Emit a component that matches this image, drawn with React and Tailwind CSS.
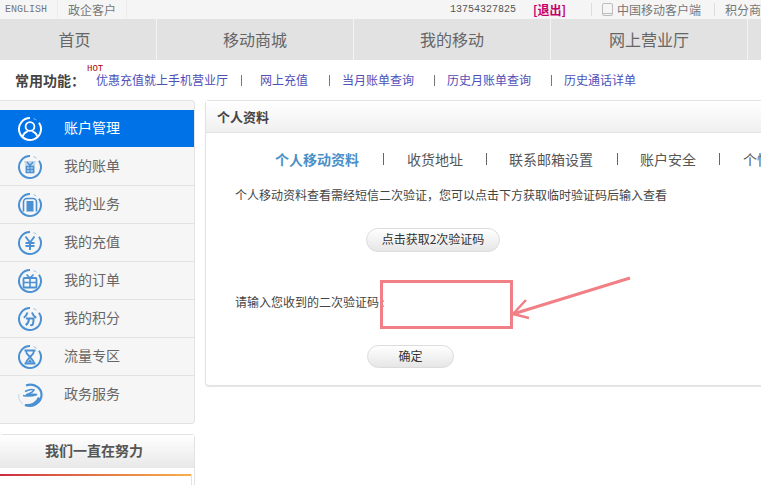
const cjk = { fontFamily: '"Noto Sans CJK SC", "Liberation Sans", sans-serif' };

function Ring({ color, children }) {
  return (
    <svg width="26" height="26" viewBox="0 0 26 26" fill="none" stroke={color} strokeWidth="1.6">
      <path d="M13 2A11 11 0 1 0 22 6.700" strokeWidth="2" />
      <path d="M16.500 2.600A11 11 0 0 1 19.500 4.200" strokeWidth="1" opacity=".5" />
      {children}
    </svg>
  );
}

const icons = [
  (c) => <Ring color={c}><circle cx="13" cy="10.500" r="4.400" strokeWidth="1.800" /><path d="M5.800 20.500c.8-4 3.800-4.500 5-5.300M20.200 20.500c-.8-4-3.800-4.500-5-5.300" strokeWidth="1.800" /></Ring>,
  (c) => <Ring color={c}><path d="M7 7h12l-1 3v9H8v-9z" fill={c} fillOpacity=".3" stroke="none" /><path d="M10 8l3 3.500L16 8M9.500 12.500h7v6h-7zM9.500 15.500h7M13 12.500v6" strokeWidth="1.400" /></Ring>,
  (c) => <Ring color={c}><path d="M6.500 19.500V10a3.500 3.500 0 0 1 3.500-3.500h6a3.500 3.500 0 0 1 3.500 3.500v9.500" /><rect x="9.500" y="9" width="7" height="10.500" fill={c} stroke="none" /></Ring>,
  (c) => <Ring color={c}><path d="M8.500 6.500L13 12.500l4.500-6M8.500 13h9M8.500 16h9M13 12.500V20" strokeWidth="1.900" /></Ring>,
  (c) => <Ring color={c}><rect x="6.500" y="10" width="13" height="9.500" rx="1" strokeWidth="1.800" /><path d="M6.500 14.500h13M13 10v9.500M9.500 6.500l3.500 3.500 3.500-3.500" strokeWidth="1.600" /></Ring>,
  (c) => <Ring color={c}><path d="M10.500 6.500C9.800 9 8.500 10.500 6.800 11.800M15 6.500c.8 2.400 2.200 4 4.200 5.300M9 12.500h7.500c0 3.500-.3 5.500-1 6.300-.5.500-1.300.4-2.300.1M12 13c-.2 2.800-1.200 4.800-3.300 6.200" strokeWidth="2" /></Ring>,
  (c) => <Ring color={c}><path d="M7.500 6.500h11M7.500 19.500h11M9 6.500c0 4 3 5 4 6.500 1-1.500 4-2.500 4-6.500M9 19.500c0-3 3-5 4-6.500 1 1.500 4 3.500 4 6.500" strokeWidth="1.800" /><path d="M10.500 18.500h5l-2.500-3.500z" fill={c} stroke="none" /></Ring>,
  (c) => (
    <svg width="26" height="26" viewBox="0 0 26 26" fill="none" stroke={c}>
      <path d="M9 3.500C17 .5 25 6 24.500 13.500 24 21 15 26 8 23 14 24 20 21 22 15.500" strokeWidth="2.200" />
      <path d="M8 9.500c3-1.500 7-2.500 9-1.500-1 2.500-5 3.500-8 5 3-.5 7-1 11-.5-4 1.500-9 2-14 1" strokeWidth="1.600" />
      <path d="M2 12c-1 4 1 8 4 10" strokeWidth="1" opacity=".3" />
    </svg>
  ),
];

const menu = ['账户管理', '我的账单', '我的业务', '我的充值', '我的订单', '我的积分', '流量专区', '政务服务'];
const links = [
  ['优惠充值就上手机营业厅', ''],
  ['网上充值', 'ml-[13px] mr-[18px]'],
  ['当月账单查询', 'ml-[21px] mr-[12px]'],
  ['历史月账单查询', 'ml-[20px] mr-[12px]'],
  ['历史通话详单', 'ml-[20px] mr-[12px]'],
];
const tabs = [
  ['个人移动资料', ''],
  ['收货地址', 'ml-[24px] mr-[23px]'],
  ['联系邮箱设置', 'ml-[23px] mr-[22px]'],
  ['账户安全', 'ml-[24px] mr-[22px]'],
  ['个性化设置', 'ml-[23px] mr-[23px]'],
];

function Pill({ className, children }) {
  return (
    <button className={`flex items-center justify-center rounded-full border border-[#dcdcdc] bg-gradient-to-b from-white to-[#e6e6e6] pb-[2px] text-[12px] text-[#333] ${className}`}>
      {children}
    </button>
  );
}

export default function App() {
  return (
    <div style={cjk} className="relative h-[485px] w-[761px] overflow-hidden bg-white text-[12px] text-[#444]">
      {/* top bar */}
      <div className="flex h-[19px] items-center overflow-hidden whitespace-nowrap bg-[#f5f5f5] text-[#777]">
        <span className="ml-[5px] w-[52px] shrink-0 font-['Liberation_Mono',monospace] text-[10px]">ENGLISH</span>
        <span className="h-[19px] w-px shrink-0 bg-[#ececec]" />
        <span className="ml-[10px] w-[58px] shrink-0">政企客户</span>
        <span className="h-[19px] w-px shrink-0 bg-[#ececec]" />
        <span className="ml-[323px] w-[83px] shrink-0 font-['Liberation_Mono',monospace] text-[10px] text-[#555]">13754327825</span>
        <span className="w-[58px] shrink-0 text-[12px] font-bold text-[#c4006c]">[退出]</span>
        <span className="h-[13px] w-px shrink-0 bg-[#dddddd]" />
        <svg className="ml-[10px] shrink-0" width="11" height="13" viewBox="0 0 11 13" fill="none">
          <rect x=".5" y=".5" width="10" height="12" rx="1.500" stroke="#bdbdbd" />
          <path d="M1 10.500h9" stroke="#bdbdbd" />
        </svg>
        <span className="ml-[4px] w-[97px] shrink-0">中国移动客户端</span>
        <span className="h-[13px] w-px shrink-0 bg-[#dddddd]" />
        <span className="ml-[10px] shrink-0">积分商城</span>
      </div>

      {/* nav */}
      <div className="flex h-[41px] items-center bg-[#e2e2e2] text-[16px] text-[#666]">
        {[['首页', 'w-[157px] pr-[7px]'], ['移动商城', 'w-[197px]'], ['我的移动', 'w-[197px]'], ['网上营业厅', 'w-[197px]']].map(([t, w]) => (
          <div key={t} className={`flex h-full items-center justify-center border-r border-[#f4f4f4] pb-[2px] ${w}`}>{t}</div>
        ))}
      </div>

      {/* common functions */}
      <div className="flex h-[40px] items-center whitespace-nowrap pl-[15px] text-[#4f4fb8]">
        <span className="w-[81px] text-[14px] font-bold text-[#444]">常用功能：</span>
        {links.map(([l, m], i) => (
          <span key={l} className="flex items-center">
            {i > 0 && <span className={`h-[11px] w-px bg-[#777] ${m}`} />}
            <span>{l}</span>
          </span>
        ))}
        <span className="absolute left-[87px] top-[64px] font-['Liberation_Mono',monospace] text-[9px] leading-[10px] text-[#b00000]">HOT</span>
      </div>

      {/* main */}
      <div className="flex items-start gap-[10px]">
        <div className="w-[195px] shrink-0">
          <div className="h-[324px] rounded-r-[4px] border border-l-0 border-[#e2e2e2] bg-[#f6f6f6] pt-[9px]">
            {menu.map((m, i) => {
              const active = i === 0;
              const last = i === menu.length - 1;
              return (
                <div
                  key={m}
                  className={`flex items-center text-[14px] ${active ? 'mb-[1px] h-[37px] bg-[#0072e8] text-white' : 'h-[38px] text-[#666]'} ${active || last ? '' : 'border-b border-[#e2e2e2]'}`}
                >
                  <span className="ml-[17px] flex w-[47px]">{icons[i](active ? '#ffffff' : '#4a90d2')}</span>
                  <span className={last ? 'mb-[4px]' : 'mb-[2px]'}>{m}</span>
                </div>
              );
            })}
          </div>
          <div className="mt-[10px] h-[80px] rounded-t-[4px] border border-l-0 border-[#e2e2e2] bg-white">
            <div className="flex h-[33px] items-center justify-center bg-gradient-to-b from-white to-[#e8e8e8] pb-[2px] pr-[6px] text-[14px] font-bold text-[#555]">我们一直在努力</div>
            <div className="mr-[2px] mt-[6px] h-[40px] border-r border-[#e2e2e2]">
              <div className="h-[2px] bg-gradient-to-r from-[#cc2a40] to-[#f5b04a]" />
            </div>
          </div>
        </div>

        <div className="relative h-[286px] w-[600px] shrink-0 rounded-l-[4px] border border-r-0 border-[#e2e2e2] shadow-[0_1px_1px_#e6e6e6]">
          <div className="flex h-[32px] items-center border-b border-[#e2e2e2] bg-gradient-to-b from-white to-[#f0f0f0] pl-[11px] text-[13px] font-bold text-[#444]">个人资料</div>
          <div className="mt-[16px] flex h-[20px] items-center whitespace-nowrap pl-[69px] text-[14px] text-[#555]">
            {tabs.map(([t, m], i) => (
              <span key={t} className="flex shrink-0 items-center">
                {i > 0 && <span className={`h-[12px] w-px bg-[#666] ${m}`} />}
                <span className={i === 0 ? 'font-bold text-[#4a90c8]' : ''}>{t}</span>
              </span>
            ))}
          </div>
          <p className="ml-[29px] mt-[16px] h-[20px] leading-[20px] text-[#444]">个人移动资料查看需经短信二次验证，您可以点击下方获取临时验证码后输入查看</p>
          <Pill className="ml-[160px] mt-[23px] h-[24px] w-[134px]">点击获取2次验证码</Pill>
          <p className="ml-[29px] mt-[40px] h-[20px] leading-[20px] text-[#444]">请输入您收到的二次验证码<span className="ml-[2px]">:</span></p>
          <Pill className="ml-[161px] mt-[33px] h-[23px] w-[87px]">确定</Pill>

          {/* annotation drawn on top of the screenshot */}
          <svg className="absolute left-[173px] top-[170px]" width="260" height="65" viewBox="0 0 260 65" fill="none" stroke="#f08085">
            <rect x="2.500" y="10.500" width="130" height="46" strokeWidth="3" />
            <path d="M251 7L134 43" strokeWidth="3" />
            <path d="M147 29L134 43L150 47" strokeWidth="2.500" />
          </svg>
        </div>
      </div>
    </div>
  );
}
